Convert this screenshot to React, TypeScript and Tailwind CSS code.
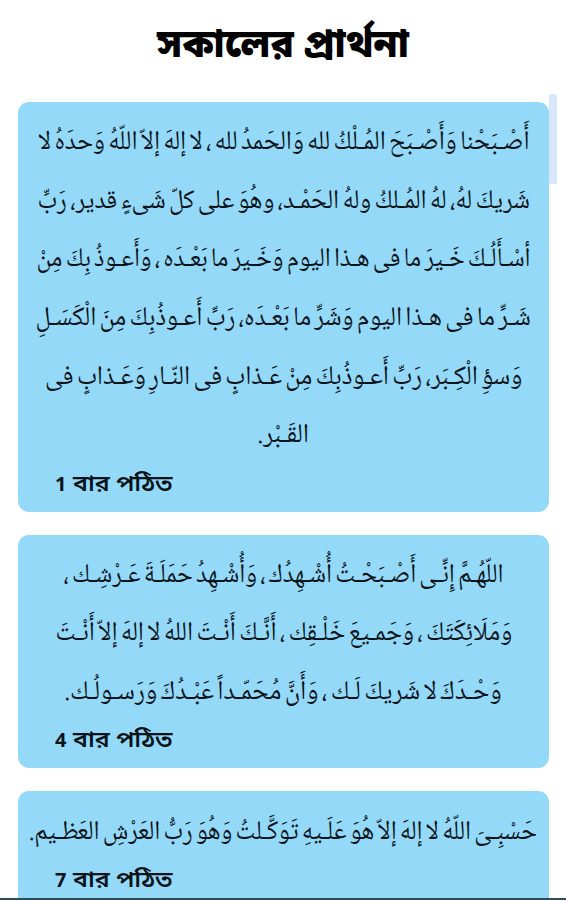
import { useLayoutEffect, useRef, useState } from "react";

type Line = { text: string; width: number };
type Prayer = { lines: Line[]; count: number };

const prayers: Prayer[] = [
  {
    count: 1,
    lines: [
      { text: "أَصْـبَحْنا وَأَصْـبَحَ المُـلْكُ لله وَالحَمدُ لله ، لا إلهَ إلاّ اللّهُ وَحدَهُ لا", width: 492 },
      { text: "شَريكَ لهُ، لهُ المُـلكُ ولهُ الحَمْـد، وهُوَ على كلّ شَىءٍ قدير، رَبِّ", width: 492 },
      { text: "أسْـأَلُـكَ خَـيرَ ما فى هـذا اليوم وَخَـيرَ ما بَعْـدَه ، وَأَعـوذُ بِكَ مِنْ", width: 494 },
      { text: "شَـرِّ ما فى هـذا اليوم وَشَرِّ ما بَعْـدَه، رَبِّ أَعـوذُبِكَ مِنَ الْكَسَـلِ", width: 495 },
      { text: "وَسؤِ الْكِـبَر، رَبِّ أَعـوذُبِكَ مِنْ عَـذابٍ فى النّـارِ وَعَـذابٍ فى", width: 477 },
      { text: "القَـبْر.", width: 52 },
    ],
  },
  {
    count: 4,
    lines: [
      { text: "اللّهُـمَّ إِنِّـى أَصْـبَحْـتُ أُشْـهِدُك ، وَأُشْـهِدُ حَمَلَـةَ عَـرْشِـك ،", width: 440 },
      { text: "وَمَلَائِكَتَكَ ، وَجَمـيعَ خَلْـقِك ، أَنَّـكَ أَنْـتَ اللهُ لا إلهَ إلاّ أَنْـتَ", width: 457 },
      { text: "وَحْـدَكَ لا شَريكَ لَـك ، وَأَنَّ مُحَمّـداً عَبْـدُكَ وَرَسـولُـك.", width: 437 },
    ],
  },
  {
    count: 7,
    lines: [
      { text: "حَسْبِـىَ اللّهُ لا إلهَ إلاّ هُوَ عَلَـيهِ تَوَكَّـلتُ وَهُوَ رَبُّ العَرْشِ العَظـيم.", width: 508 },
    ],
  },
];

// Stretches one line of script so that it fills its measure
function ArabicLine({ text, width }: Line) {
  const ref = useRef<HTMLSpanElement>(null);
  const [scale, setScale] = useState(1);

  useLayoutEffect(() => {
    if (ref.current) setScale(width / ref.current.offsetWidth);
  }, [width]);

  return (
    <p className="flex h-[58.6px] items-center justify-center">
      <span
        ref={ref}
        className="shrink-0 text-[27px] leading-[58px] [word-spacing:-2.5px] whitespace-nowrap"
        style={{ transform: `scaleX(${scale})` }}
      >
        {text}
      </span>
    </p>
  );
}

function PrayerCard({ lines, count }: Prayer) {
  return (
    <section className="rounded-[11px] bg-[#95d9f9] pt-[12px] pb-[14px]">
      <div
        dir="rtl"
        lang="ar"
        className="font-['Noto_Naskh_Arabic','Amiri','Scheherazade_New','Noto_Sans_Arabic','DejaVu_Sans',serif]"
      >
        {lines.map((line) => (
          <ArabicLine key={line.text} {...line} />
        ))}
      </div>
      <p className="flex h-[32px] items-baseline gap-[7px] pl-[37px] leading-[32px] font-bold">
        <span className="text-[20px]">{count}</span>
        <span className="origin-left scale-x-[1.13] text-[22px] font-semibold">বার পঠিত</span>
      </p>
    </section>
  );
}

export default function App() {
  return (
    <main className="relative h-[900px] overflow-hidden bg-white font-['Noto_Sans','Noto_Sans_Bengali',sans-serif] text-[#08141a]">
      <h1 className="h-[102px] pt-[18px] text-center text-[38.5px] leading-[48px] font-black text-black">
        সকালের প্রার্থনা
      </h1>
      <div className="flex flex-col gap-[23px] pr-[17px] pl-[18px]">
        {prayers.map((prayer) => (
          <PrayerCard key={prayer.count} {...prayer} />
        ))}
      </div>
      {/* Scrollbar thumb */}
      <div className="absolute top-[94px] right-[9px] h-[90px] w-[8px] rounded-t-[2px] bg-[#d9e7fd]" />
      <div className="absolute inset-x-0 bottom-0 h-[2px] bg-[#2f4b58]" />
    </main>
  );
}
